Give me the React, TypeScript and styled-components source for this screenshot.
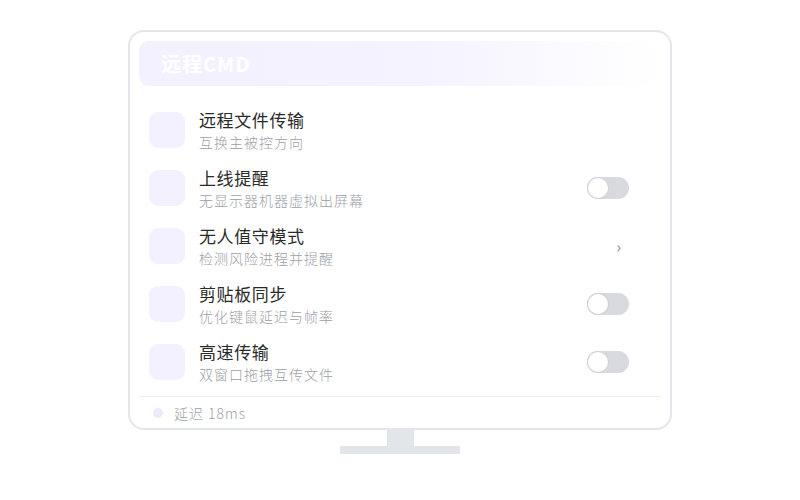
import styled, { createGlobalStyle } from 'styled-components';

const GlobalStyle = createGlobalStyle`
  html, body {
    margin: 0;
    background: #ffffff;
    font-family: "Noto Sans CJK SC", "Noto Sans", sans-serif;
  }
`;

type Control = 'toggle' | 'chevron' | 'none';

const items: { title: string; desc: string; control: Control }[] = [
  { title: '远程文件传输', desc: '互换主被控方向', control: 'none' },
  { title: '上线提醒', desc: '无显示器机器虚拟出屏幕', control: 'toggle' },
  { title: '无人值守模式', desc: '检测风险进程并提醒', control: 'chevron' },
  { title: '剪贴板同步', desc: '优化键鼠延迟与帧率', control: 'toggle' },
  { title: '高速传输', desc: '双窗口拖拽互传文件', control: 'toggle' },
];

export default function App() {
  return (
    <>
      <GlobalStyle />
      <Page>
        <Monitor>
          <Header>远程CMD</Header>
          <List>
            {items.map((item) => (
              <Row key={item.title}>
                <IconBox />
                <Texts>
                  <Title>{item.title}</Title>
                  <Desc>{item.desc}</Desc>
                </Texts>
                {item.control === 'toggle' && (
                  <Toggle>
                    <Knob />
                  </Toggle>
                )}
                {item.control === 'chevron' && <Chevron>›</Chevron>}
              </Row>
            ))}
          </List>
          <Footer>
            <Dot />
            <FooterText>延迟 18ms</FooterText>
          </Footer>
        </Monitor>
        <Neck />
        <Base />
      </Page>
    </>
  );
}

const Page = styled.div`
  display: flex;
  flex-direction: column;
  align-items: center;
  padding-top: 30px;
`;

const Monitor = styled.div`
  width: 544px;
  box-sizing: border-box;
  border: 2px solid #e3e6ea;
  border-radius: 16px;
  padding: 9px 9px 0;
  background: #ffffff;
  display: flex;
  flex-direction: column;
`;

const Header = styled.div`
  height: 45px;
  border-radius: 10px;
  background: linear-gradient(90deg, #f3f0ff 0%, #f5f3ff 55%, rgba(245, 243, 255, 0) 100%);
  color: #ffffff;
  font-size: 20px;
  font-weight: 700;
  letter-spacing: 1px;
  display: flex;
  align-items: center;
  padding-left: 22px;
`;

const List = styled.div`
  display: flex;
  flex-direction: column;
  margin-top: 15px;
`;

const Row = styled.div`
  height: 58px;
  display: flex;
  align-items: center;
  padding: 0 32px 0 10px;
`;

const IconBox = styled.div`
  width: 36px;
  height: 36px;
  border-radius: 9px;
  background: #f3f0ff;
  flex-shrink: 0;
`;

const Texts = styled.div`
  flex: 1;
  display: flex;
  flex-direction: column;
  gap: 2px;
  margin-left: 14px;
`;

const Title = styled.div`
  font-size: 17px;
  font-weight: 400;
  line-height: 22px;
  letter-spacing: 0.6px;
  color: #2a2a2a;
`;

const Desc = styled.div`
  font-size: 14px;
  font-weight: 300;
  line-height: 18px;
  letter-spacing: 1px;
  color: #9ca0a8;
`;

const Toggle = styled.div`
  position: relative;
  width: 42px;
  height: 22px;
  border-radius: 11px;
  background: #d8dae0;
`;

const Knob = styled.div`
  position: absolute;
  top: 1px;
  left: 1px;
  width: 20px;
  height: 20px;
  border-radius: 50%;
  background: #ffffff;
  box-shadow: 0 0 0 1px #d0d3d9;
`;

const Chevron = styled.div`
  font-size: 16px;
  color: #8a8f98;
  margin-right: 8px;
  line-height: 1;
`;

const Footer = styled.div`
  height: 31px;
  border-top: 1px solid #eceef1;
  margin-top: 5px;
  display: flex;
  align-items: center;
  padding-left: 14px;
  gap: 11px;
`;

const Dot = styled.div`
  width: 10px;
  height: 10px;
  border-radius: 50%;
  background: #ede9fe;
`;

const FooterText = styled.div`
  font-size: 14px;
  font-weight: 300;
  letter-spacing: 1px;
  color: #9ca0a8;
`;

const Neck = styled.div`
  width: 27px;
  height: 16px;
  background: #e2e5e9;
`;

const Base = styled.div`
  width: 120px;
  height: 8px;
  background: #e2e5e9;
`;
